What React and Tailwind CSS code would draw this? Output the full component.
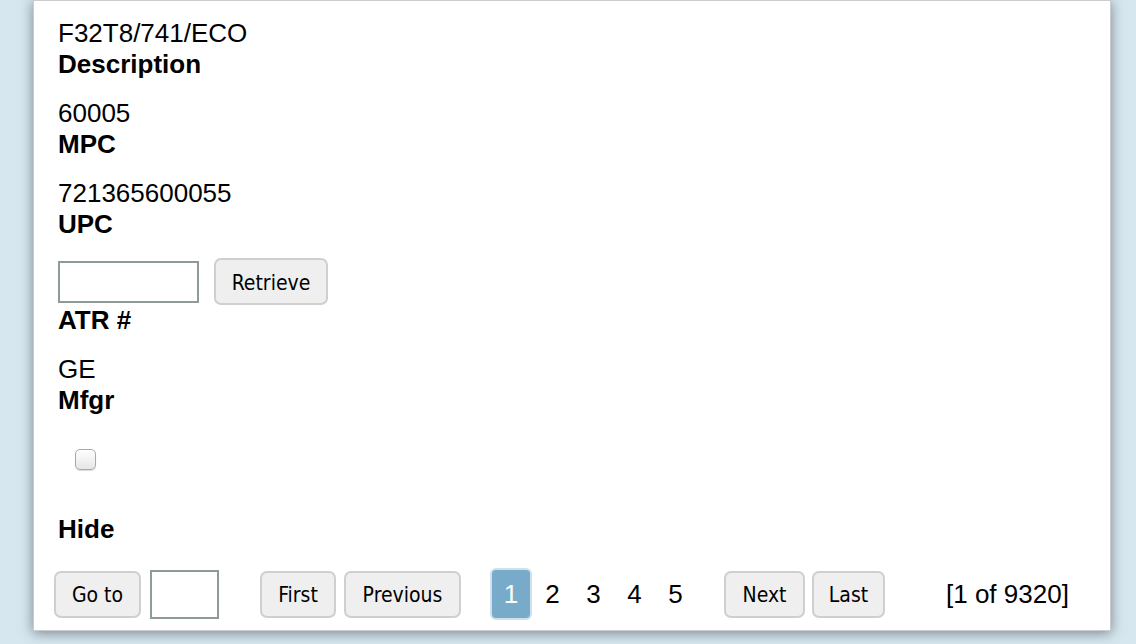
import React from "react";

const btn =
  "h-[47px] rounded-[7px] border-2 border-[#cfcfcf] bg-[#efefef] text-[21px] text-black flex items-center justify-center pt-[4px]";
const btnFont = { fontFamily: '"DejaVu Sans Condensed", "DejaVu Sans", Tahoma, sans-serif' };

function Field({ value, label }) {
  return (
    <div className="mb-[18px]">
      <div className="leading-[31px]">{value}</div>
      <div className="leading-[31px] font-bold">{label}</div>
    </div>
  );
}

export default function App() {
  return (
    <div
      className="w-[1136px] h-[644px] overflow-hidden bg-[#d7e7ef] text-[26px] text-black"
      style={{ fontFamily: '"Liberation Sans", Arial, sans-serif' }}
    >
      <div className="ml-[33px] w-[1078px] h-[631px] bg-white border border-[#c9cdd0] shadow-[0_2px_12px_rgba(40,50,60,0.55)] flex flex-col">
        <div className="pl-[24px] pt-[17px]">
          <Field value="F32T8/741/ECO" label="Description" />
          <Field value="60005" label="MPC" />
          <Field value="721365600055" label="UPC" />
          <div className="mb-[18px]">
            <div className="flex items-center h-[47px]">
              <div className="w-[141px] h-[42px] border-2 border-[#8f9b99] bg-white" />
              <div className={btn + " w-[114px] ml-[15px] h-[46px]"} style={btnFont}>
                Retrieve
              </div>
            </div>
            <div className="leading-[31px] font-bold">ATR #</div>
          </div>
          <Field value="GE" label="Mfgr" />
          <div className="h-[80px] pt-[14.5px]">
            <div className="ml-[17px] w-[21px] h-[21px] rounded-[5px] border border-[#a9a9a9] bg-gradient-to-b from-white to-[#e6e6e6] shadow-[0_1px_1px_rgba(0,0,0,0.15)]" />
          </div>
          <div className="leading-[31px] font-bold">Hide</div>
        </div>
        <div className="flex items-center h-[52px] mt-[23px] pl-[20px]">
          <div className={btn + " w-[87px]"} style={btnFont}>Go to</div>
          <div className="ml-[9px] w-[69px] h-[49px] border-2 border-[#8f9b99] bg-white" />
          <div className={btn + " ml-[41px] w-[76px]"} style={btnFont}>First</div>
          <div className={btn + " ml-[8px] w-[117px]"} style={btnFont}>Previous</div>
          <div className="ml-[29px] w-[42px] h-[52px] rounded-[6px] bg-[#78aac9] border-2 border-[#cfe1ec] text-white flex items-center justify-center">
            1
          </div>
          <div className="w-[41px] text-center">2</div>
          <div className="w-[41px] text-center">3</div>
          <div className="w-[41px] text-center">4</div>
          <div className="w-[41px] text-center">5</div>
          <div className={btn + " ml-[28px] w-[81px]"} style={btnFont}>Next</div>
          <div className={btn + " ml-[7px] w-[73px]"} style={btnFont}>Last</div>
          <div className="ml-[61px]">[1 of 9320]</div>
        </div>
      </div>
    </div>
  );
}
